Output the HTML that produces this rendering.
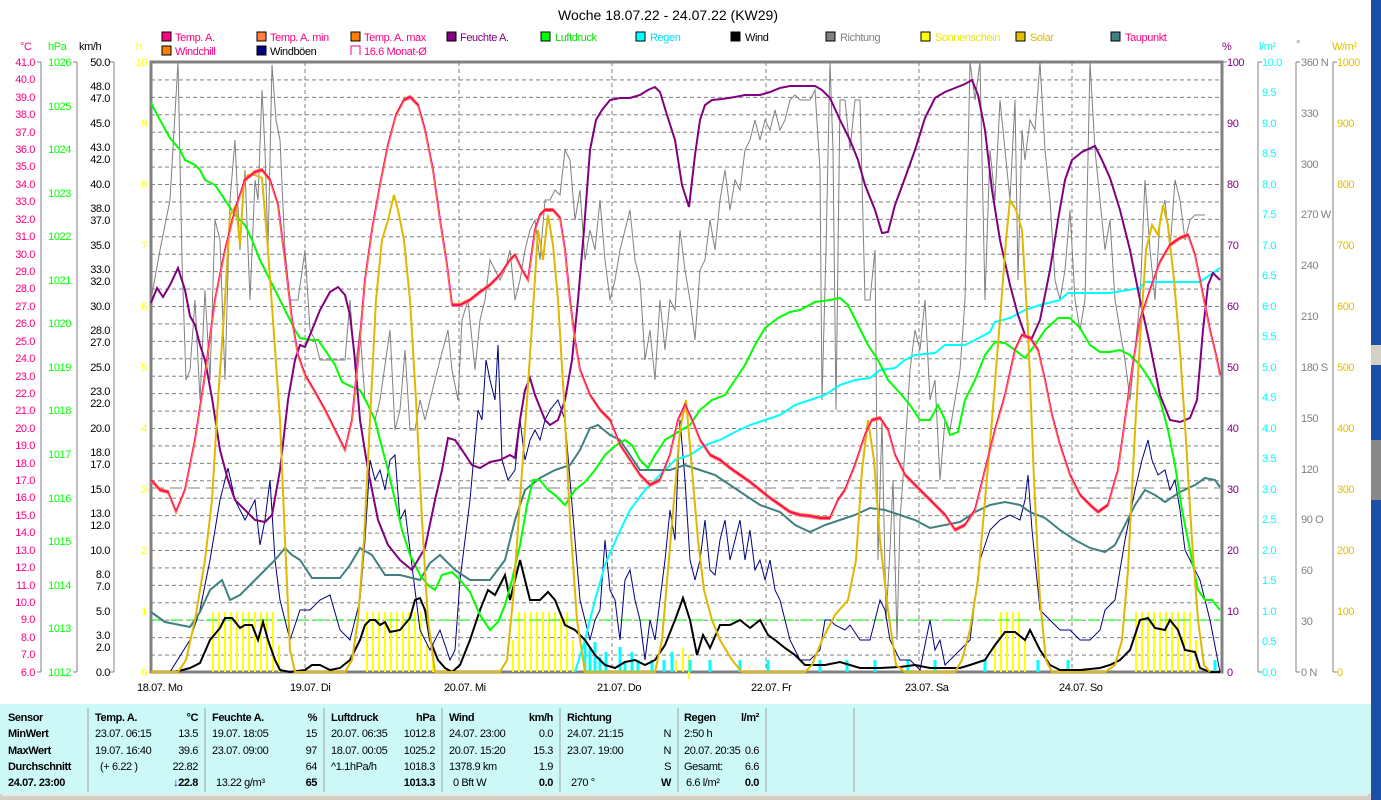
<!DOCTYPE html>
<html><head><meta charset="utf-8"><style>
html,body{margin:0;padding:0;background:#fff;width:1381px;height:800px;overflow:hidden}
svg{display:block;font-family:"Liberation Sans",sans-serif;letter-spacing:-0.4px}
</style></head><body>
<svg width="1381" height="800" viewBox="0 0 1381 800" xmlns="http://www.w3.org/2000/svg">
<rect width="1381" height="800" fill="#fff"/>
<text x="668" y="20" font-size="14" text-anchor="middle" fill="#000" style="letter-spacing:0">Woche 18.07.22 - 24.07.22 (KW29)</text>
<g font-size="11">
<rect x="162" y="32" width="9" height="9" fill="#ff0080" stroke="#000"/><text x="175" y="41" fill="#ff0080">Temp. A.</text>
<rect x="257" y="32" width="9" height="9" fill="#ff8040" stroke="#000"/><text x="270" y="41" fill="#ff0080">Temp. A. min</text>
<rect x="351" y="32" width="9" height="9" fill="#ff8000" stroke="#000"/><text x="364" y="41" fill="#ff0080">Temp. A. max</text>
<rect x="447" y="32" width="9" height="9" fill="#800080" stroke="#000"/><text x="460" y="41" fill="#800080">Feuchte A.</text>
<rect x="541" y="32" width="9" height="9" fill="#00ff00" stroke="#000"/><text x="555" y="41" fill="#00e000">Luftdruck</text>
<rect x="636" y="32" width="9" height="9" fill="#00ffff" stroke="#000"/><text x="650" y="41" fill="#00e0f0">Regen</text>
<rect x="731" y="32" width="9" height="9" fill="#000" stroke="#000"/><text x="745" y="41" fill="#000">Wind</text>
<rect x="826" y="32" width="9" height="9" fill="#808080" stroke="#000"/><text x="840" y="41" fill="#808080">Richtung</text>
<rect x="921" y="32" width="9" height="9" fill="#ffff00" stroke="#000"/><text x="935" y="41" fill="#e8e800">Sonnenschein</text>
<rect x="1016" y="32" width="9" height="9" fill="#e0c000" stroke="#000"/><text x="1030" y="41" fill="#e0b800">Solar</text>
<rect x="1111" y="32" width="9" height="9" fill="#408080" stroke="#000"/><text x="1125" y="41" fill="#ff0080">Taupunkt</text>
<rect x="162" y="46" width="9" height="9" fill="#ff8000" stroke="#000"/><text x="175" y="55" fill="#ff0080">Windchill</text>
<rect x="257" y="46" width="9" height="9" fill="#000080" stroke="#000"/><text x="270" y="55" fill="#000">Windböen</text>
<path d="M351 55V46h9v9" fill="none" stroke="#ff0080"/><text x="364" y="55" fill="#ff0080">16.6 Monat-Ø</text>
</g>
<g font-size="11">
<text x="20" y="50" fill="#ff0080">°C</text><text x="48" y="50" fill="#00ff00">hPa</text><text x="79" y="50" fill="#000">km/h</text><text x="136" y="50" fill="#ffff00">h</text>
<text x="1222" y="50" fill="#800080">%</text><text x="1259" y="50" fill="#00ffff">l/m²</text><text x="1296" y="48" fill="#808080">°</text><text x="1332" y="50" fill="#e0c000">W/m²</text>
</g>
<defs>
<pattern id="hg" x="151" y="62" width="1071" height="17.4286" patternUnits="userSpaceOnUse"><line x1="0" y1="0.5" x2="1071" y2="0.5" stroke="#808080" stroke-dasharray="4,3"/></pattern>
</defs>
<rect x="152" y="63" width="1069" height="609" fill="url(#hg)"/>
<g stroke="#808080" stroke-dasharray="4,3">
<line x1="305" y1="62" x2="305" y2="672"/><line x1="459" y1="62" x2="459" y2="672"/><line x1="612" y1="62" x2="612" y2="672"/><line x1="766" y1="62" x2="766" y2="672"/><line x1="919" y1="62" x2="919" y2="672"/><line x1="1072" y1="62" x2="1072" y2="672"/>
</g>
<g stroke="#808080" fill="none">
<line x1="41" y1="62" x2="41" y2="672"/><line x1="77" y1="62" x2="77" y2="672"/><line x1="114" y1="62" x2="114" y2="672"/>
<rect x="151" y="62" width="1071" height="610" stroke-width="3"/>
<line x1="1258" y1="62" x2="1258" y2="672"/><line x1="1296" y1="62" x2="1296" y2="672"/><line x1="1333" y1="62" x2="1333" y2="672"/>
</g>
<g font-size="11" fill="#ff0080" text-anchor="end">
<text x="35" y="66">41.0</text><text x="35" y="83">40.0</text><text x="35" y="101">39.0</text><text x="35" y="118">38.0</text><text x="35" y="136">37.0</text><text x="35" y="153">36.0</text><text x="35" y="170">35.0</text><text x="35" y="188">34.0</text><text x="35" y="205">33.0</text><text x="35" y="223">32.0</text><text x="35" y="240">31.0</text><text x="35" y="258">30.0</text><text x="35" y="275">29.0</text><text x="35" y="292">28.0</text><text x="35" y="310">27.0</text><text x="35" y="327">26.0</text><text x="35" y="345">25.0</text><text x="35" y="362">24.0</text><text x="35" y="380">23.0</text><text x="35" y="397">22.0</text><text x="35" y="414">21.0</text><text x="35" y="432">20.0</text><text x="35" y="449">19.0</text><text x="35" y="467">18.0</text><text x="35" y="484">17.0</text><text x="35" y="501">16.0</text><text x="35" y="519">15.0</text><text x="35" y="536">14.0</text><text x="35" y="554">13.0</text><text x="35" y="571">12.0</text><text x="35" y="589">11.0</text><text x="35" y="606">10.0</text><text x="35" y="623">9.0</text><text x="35" y="641">8.0</text><text x="35" y="658">7.0</text><text x="35" y="676">6.0</text>
</g>
<g font-size="11" fill="#00ff00" text-anchor="end">
<text x="71" y="66">1026</text><text x="71" y="110">1025</text><text x="71" y="153">1024</text><text x="71" y="197">1023</text><text x="71" y="240">1022</text><text x="71" y="284">1021</text><text x="71" y="327">1020</text><text x="71" y="371">1019</text><text x="71" y="414">1018</text><text x="71" y="458">1017</text><text x="71" y="502">1016</text><text x="71" y="545">1015</text><text x="71" y="589">1014</text><text x="71" y="632">1013</text><text x="71" y="676">1012</text>
</g>
<g font-size="11" fill="#000" text-anchor="end">
<text x="110" y="66">50.0</text><text x="110" y="90">48.0</text><text x="110" y="102">47.0</text><text x="110" y="127">45.0</text><text x="110" y="151">43.0</text><text x="110" y="163">42.0</text><text x="110" y="188">40.0</text><text x="110" y="212">38.0</text><text x="110" y="224">37.0</text><text x="110" y="249">35.0</text><text x="110" y="273">33.0</text><text x="110" y="285">32.0</text><text x="110" y="310">30.0</text><text x="110" y="334">28.0</text><text x="110" y="346">27.0</text><text x="110" y="371">25.0</text><text x="110" y="395">23.0</text><text x="110" y="407">22.0</text><text x="110" y="432">20.0</text><text x="110" y="456">18.0</text><text x="110" y="468">17.0</text><text x="110" y="493">15.0</text><text x="110" y="517">13.0</text><text x="110" y="529">12.0</text><text x="110" y="554">10.0</text><text x="110" y="578">8.0</text><text x="110" y="590">7.0</text><text x="110" y="615">5.0</text><text x="110" y="639">3.0</text><text x="110" y="651">2.0</text><text x="110" y="676">0.0</text>
</g>
<g font-size="11" fill="#ffff00" text-anchor="end">
<text x="147" y="66">10</text><text x="147" y="127">9</text><text x="147" y="188">8</text><text x="147" y="249">7</text><text x="147" y="310">6</text><text x="147" y="371">5</text><text x="147" y="432">4</text><text x="147" y="493">3</text><text x="147" y="554">2</text><text x="147" y="615">1</text><text x="147" y="676">0</text>
</g>
<g font-size="11" fill="#800080">
<text x="1227" y="66">100</text><text x="1227" y="127">90</text><text x="1227" y="188">80</text><text x="1227" y="249">70</text><text x="1227" y="310">60</text><text x="1227" y="371">50</text><text x="1227" y="432">40</text><text x="1227" y="493">30</text><text x="1227" y="554">20</text><text x="1227" y="615">10</text><text x="1227" y="676">0</text>
</g>
<g font-size="11" fill="#00ffff">
<text x="1262" y="66">10.0</text><text x="1262" y="96">9.5</text><text x="1262" y="127">9.0</text><text x="1262" y="157">8.5</text><text x="1262" y="188">8.0</text><text x="1262" y="218">7.5</text><text x="1262" y="249">7.0</text><text x="1262" y="279">6.5</text><text x="1262" y="310">6.0</text><text x="1262" y="340">5.5</text><text x="1262" y="371">5.0</text><text x="1262" y="401">4.5</text><text x="1262" y="432">4.0</text><text x="1262" y="462">3.5</text><text x="1262" y="493">3.0</text><text x="1262" y="523">2.5</text><text x="1262" y="554">2.0</text><text x="1262" y="584">1.5</text><text x="1262" y="615">1.0</text><text x="1262" y="645">0.5</text><text x="1262" y="676">0.0</text>
</g>
<g font-size="11" fill="#808080">
<text x="1301" y="66">360 N</text><text x="1301" y="117">330</text><text x="1301" y="168">300</text><text x="1301" y="218">270 W</text><text x="1301" y="269">240</text><text x="1301" y="320">210</text><text x="1301" y="371">180 S</text><text x="1301" y="422">150</text><text x="1301" y="473">120</text><text x="1301" y="523">90 O</text><text x="1301" y="574">60</text><text x="1301" y="625">30</text><text x="1301" y="676">0 N</text>
</g>
<g font-size="11" fill="#e0c000">
<text x="1337" y="66">1000</text><text x="1337" y="127">900</text><text x="1337" y="188">800</text><text x="1337" y="249">700</text><text x="1337" y="310">600</text><text x="1337" y="371">500</text><text x="1337" y="432">400</text><text x="1337" y="493">300</text><text x="1337" y="554">200</text><text x="1337" y="615">100</text><text x="1337" y="676">0</text>
</g>
<g stroke="#808080">
<path d="M37 62h4M37 672h4M73 62h4M73 672h4M110 62h4M110 672h4M1222 62h5M1258 62h4M1296 62h4M1333 62h4M1258 672h4M1296 672h4M1333 672h4"/>
</g>
<g font-size="11" fill="#000">
<text x="137" y="691">18.07. Mo</text><text x="290" y="691">19.07. Di</text><text x="444" y="691">20.07. Mi</text><text x="597" y="691">21.07. Do</text><text x="751" y="691">22.07. Fr</text><text x="905" y="691">23.07. Sa</text><text x="1059" y="691">24.07. So</text>
</g>
<g stroke="#ffff00" stroke-width="2">
<path d="M213 612v60M219 612v60M225 612v60M231 612v60M237 612v60M243 612v60M249 612v60M255 612v60M261 612v60M267 612v60M273 612v60M279 645v27
M367 612v60M373 612v60M379 612v60M385 612v60M391 612v60M397 612v60M403 612v60M409 612v60M415 612v60M421 612v60M427 645v27M433 645v27
M513 640v32M519 612v60M525 612v60M531 612v60M537 612v60M543 612v60M549 612v60M555 612v60M561 612v60M567 612v60M573 640v32
M683 648v24M689 655v24M676 660v12M1001 612v60M1007 612v60M1013 612v60M1019 612v60M1025 640v32M995 645v27
M1136 612v60M1142 612v60M1148 612v60M1154 612v60M1160 612v60M1166 612v60M1172 612v60M1178 612v60M1184 612v60M1190 612v60M1196 640v32"/>
</g>
<g stroke="#00ffff" stroke-width="3">
<path d="M585 672v-35M590 672v-25M595 672v-30M600 672v-15M606 672v-20M620 672v-25M625 672v-10M632 672v-20M638 672v-12M652 672v-12M664 672v-12M672 672v-20M690 672v-12M710 672v-12M740 672v-12M768 672v-12M820 672v-12M847 672v-12M875 672v-12M908 672v-12M935 672v-12M985 672v-12M1038 672v-12M1068 672v-12M1215 672v-12"/>
</g>
<line x1="152" y1="620" x2="1221" y2="620" stroke="#00ff00" stroke-dasharray="12,6"/>
<line x1="152" y1="488" x2="1221" y2="488" stroke="#808080" stroke-dasharray="12,6"/>
<polyline fill="none" stroke="#808080" stroke-width="1" points="151,300 160,250 170,200 178,62 182,260 186,380 190,370 195,300 200,400 205,290 210,380 215,220 220,240 225,380 230,200 235,140 240,250 245,170 250,300 255,180 258,200 262,90 265,150 268,250 272,65 276,120 280,140 285,250 290,300 298,300 305,250 310,330 315,340 320,360 345,360 350,300 355,370 360,330 365,400 375,420 380,400 390,330 395,430 400,410 405,350 410,430 415,430 420,400 425,420 430,400 440,360 448,330 452,370 458,400 462,320 468,300 472,340 475,370 480,320 485,300 490,260 495,270 500,280 505,270 510,250 515,300 520,280 525,250 530,230 535,220 540,260 545,200 550,200 555,190 560,195 565,150 570,160 575,220 580,190 585,260 590,230 595,250 600,200 605,260 610,300 615,280 620,250 625,230 630,210 635,260 640,280 645,360 650,330 655,380 660,300 665,350 670,300 675,310 680,230 685,270 690,300 695,340 700,270 705,260 710,220 715,250 720,200 725,170 730,210 735,180 740,190 745,150 750,140 755,120 760,140 765,120 770,130 775,110 780,130 785,120 790,100 795,95 800,100 810,100 815,90 820,170 822,400 826,250 830,62 833,150 836,410 840,100 845,100 850,150 855,100 860,100 865,300 870,300 875,250 878,560 882,420 886,620 890,550 893,480 897,640 900,520 905,450 910,370 915,330 920,350 925,300 930,400 935,380 940,480 945,420 950,430 955,400 960,370 965,300 970,62 975,100 980,62 985,300 990,150 995,200 1000,100 1005,150 1010,200 1015,100 1018,280 1022,130 1025,160 1030,120 1035,130 1040,62 1045,150 1050,200 1055,280 1060,300 1065,270 1070,210 1075,300 1080,330 1085,300 1090,62 1095,150 1100,200 1105,250 1110,220 1115,300 1120,330 1125,360 1130,400 1135,350 1140,300 1145,180 1150,250 1155,300 1160,220 1165,200 1170,250 1175,180 1180,200 1185,240 1190,220 1195,215 1205,215"/>
<polyline fill="none" stroke="#000080" stroke-width="1" points="151,672 170,672 190,640 200,610 210,560 220,500 228,468 235,500 245,520 255,500 260,545 265,520 270,480 275,560 280,600 290,640 300,610 310,610 320,600 330,595 340,630 350,640 360,600 365,540 370,460 375,480 380,470 385,490 390,460 395,455 400,520 405,510 410,550 420,630 430,650 440,630 450,660 455,650 460,580 470,500 478,410 482,420 486,360 490,380 495,400 498,345 502,460 508,480 515,470 520,420 525,460 530,440 535,430 540,440 545,420 550,410 558,400 565,420 570,480 575,540 580,600 585,620 590,640 595,620 600,610 605,540 610,590 615,600 620,640 625,580 630,570 635,600 640,620 645,660 650,620 655,640 660,600 665,560 670,510 675,540 680,420 685,480 690,560 695,580 700,560 705,520 710,570 715,575 720,540 725,520 730,560 740,520 745,560 750,530 755,570 760,560 765,580 770,560 775,590 780,600 790,640 800,660 810,660 820,650 825,620 830,620 835,625 845,630 850,625 860,640 870,640 880,600 885,610 890,640 900,660 910,660 920,670 930,620 935,650 940,640 945,665 960,650 970,640 980,560 990,530 1000,520 1010,515 1020,520 1025,500 1028,475 1032,530 1040,610 1050,620 1060,630 1070,630 1080,640 1090,640 1100,630 1105,610 1115,600 1125,540 1135,490 1142,460 1148,440 1152,460 1158,475 1165,470 1170,490 1175,480 1180,510 1185,550 1190,560 1200,580 1210,620 1220,672"/>
<polyline fill="none" stroke="#00ffff" stroke-width="2" points="575,672 585,640 595,600 605,565 618,535 630,510 645,490 660,475 675,460 690,455 705,445 720,440 735,432 750,425 765,420 780,415 795,405 810,400 825,395 840,385 855,380 870,378 880,370 895,368 905,360 915,355 935,353 945,345 965,345 975,340 990,332 995,322 1010,318 1025,310 1040,305 1060,300 1068,293 1110,293 1140,288 1145,282 1200,282 1210,275 1220,268"/>
<polyline fill="none" stroke="#000" stroke-width="2" points="151,672 175,672 190,668 200,663 210,640 220,628 225,618 232,618 240,628 245,625 252,625 258,640 263,622 268,640 275,660 280,670 290,672 305,670 312,665 320,665 330,670 340,668 350,660 360,640 365,625 370,620 375,620 380,625 385,622 390,632 400,630 410,618 415,600 420,598 425,610 430,640 438,660 445,668 452,672 460,665 470,640 480,610 488,590 495,595 500,585 505,575 510,600 520,560 525,580 530,600 540,600 548,592 555,600 565,625 575,630 585,640 595,655 605,665 615,668 625,662 635,660 645,665 655,660 665,645 675,620 683,598 690,620 697,655 703,635 710,648 720,625 730,625 740,620 750,628 760,620 768,635 775,640 785,648 795,655 805,665 815,665 825,665 840,662 850,665 860,668 880,668 900,667 915,665 930,668 945,668 960,668 970,665 985,660 995,645 1005,632 1015,632 1025,640 1030,630 1040,650 1050,665 1060,670 1080,670 1100,668 1110,665 1120,660 1130,650 1140,620 1148,618 1155,628 1165,630 1170,620 1178,630 1185,650 1195,652 1200,668 1210,672 1220,672"/>
<polyline fill="none" stroke="#408080" stroke-width="2" points="151,612 165,622 180,625 190,627 200,612 210,590 222,580 230,600 240,595 255,580 265,570 275,560 285,548 292,555 300,560 312,578 325,578 340,578 350,565 360,548 372,555 385,575 400,575 420,580 430,563 440,555 455,570 470,580 490,580 505,560 515,520 525,490 540,478 555,470 570,465 580,450 590,428 598,425 610,435 620,440 630,455 640,470 655,470 670,470 685,465 700,470 715,475 730,485 745,495 760,505 780,512 795,525 810,532 825,525 840,520 855,515 870,508 885,510 900,515 915,520 930,528 945,525 960,522 975,512 990,505 1005,502 1020,505 1030,512 1045,518 1060,530 1075,540 1090,548 1105,552 1115,545 1125,525 1135,505 1145,490 1155,495 1165,502 1180,492 1195,485 1205,478 1215,480 1220,487"/>
<polyline fill="none" stroke="#00ff00" stroke-width="2" points="151,103 160,120 170,138 180,150 185,160 195,165 200,170 205,180 215,185 225,200 235,215 245,225 252,240 260,260 270,280 280,300 290,320 295,330 300,338 310,340 318,340 325,350 335,365 342,382 350,386 360,390 368,405 375,420 380,440 388,470 395,500 402,530 410,555 420,575 428,585 435,590 442,575 452,572 460,580 470,592 480,615 490,630 498,622 505,605 512,580 520,545 527,505 533,480 540,480 548,490 555,495 565,505 575,490 585,482 595,470 605,455 615,446 625,440 632,445 640,460 648,468 655,455 665,440 678,432 690,425 700,410 712,400 725,395 735,380 745,365 755,345 765,328 778,318 790,312 800,310 815,302 830,300 840,298 848,305 858,325 868,345 878,360 888,380 900,393 910,405 920,420 930,420 938,405 945,420 950,435 958,432 965,400 975,380 985,355 995,342 1005,343 1015,350 1025,358 1035,345 1045,330 1058,318 1070,318 1080,328 1090,345 1100,352 1110,352 1120,350 1130,355 1140,365 1150,380 1160,400 1168,430 1175,465 1182,510 1190,550 1198,590 1205,600 1212,600 1220,610"/>
<polyline fill="none" stroke="#800080" stroke-width="2" points="151,303 157,288 163,297 170,285 178,268 185,290 190,316 195,325 200,345 205,360 212,398 220,450 228,480 235,500 245,510 255,520 265,522 272,515 280,470 288,400 295,360 300,345 305,347 312,330 320,310 330,292 338,287 345,295 350,315 355,360 360,420 368,470 378,520 388,545 400,560 412,570 425,548 435,500 442,470 448,438 455,440 462,450 472,465 480,468 490,462 500,460 510,455 515,458 520,420 525,390 530,378 535,395 545,420 550,425 558,420 565,400 572,360 578,300 584,230 590,150 596,120 602,110 610,100 620,98 630,98 640,95 648,90 655,87 660,92 667,115 675,140 682,185 689,207 695,155 700,120 705,105 712,100 722,99 735,97 745,95 760,95 770,92 780,88 790,86 805,86 815,86 822,90 830,98 840,120 850,140 858,160 865,185 875,210 882,233 888,232 895,205 905,178 915,150 925,118 935,98 945,92 955,88 965,84 972,80 978,95 985,130 992,190 1000,240 1010,285 1018,315 1025,335 1032,338 1040,320 1050,270 1058,220 1065,180 1072,160 1082,152 1095,146 1102,160 1110,178 1120,210 1130,250 1140,300 1150,345 1160,395 1170,420 1180,422 1190,418 1197,400 1203,330 1208,285 1213,273 1220,280"/>
<polyline fill="none" stroke="#e0b800" stroke-width="2" points="151,672 178,672 186,660 195,620 205,560 212,500 218,400 225,300 230,215 236,205 240,245 244,180 248,175 255,175 262,178 268,250 273,320 280,420 285,540 290,650 295,672 345,672 352,660 358,620 364,540 370,420 376,300 382,240 388,220 394,195 398,210 404,240 410,300 416,400 422,520 428,620 435,672 500,672 507,660 513,600 520,500 527,400 533,310 538,230 543,260 548,215 553,245 558,300 564,400 570,520 577,620 585,672 655,672 662,640 668,570 674,500 680,430 686,400 692,470 698,540 704,590 712,620 720,640 732,660 742,672 805,672 812,665 822,640 835,615 848,600 856,560 862,470 868,420 874,460 880,540 888,610 896,665 905,672 955,672 962,660 970,630 978,580 985,500 992,420 1000,320 1006,240 1010,200 1016,210 1022,230 1028,330 1034,480 1040,600 1046,660 1052,672 1105,672 1115,665 1122,640 1128,570 1134,450 1140,340 1146,250 1152,225 1158,235 1163,205 1168,225 1174,280 1180,350 1186,440 1192,540 1198,620 1204,665 1210,672"/>
<polyline fill="none" stroke="#ff8000" stroke-width="1" transform="translate(0,-1.5)" points="151,480 160,490 168,492 176,512 185,490 195,440 205,375 215,300 225,250 235,210 245,180 255,172 262,170 270,180 278,205 285,260 292,320 298,355 305,375 315,392 325,410 335,430 345,450 352,420 358,360 365,280 372,230 380,185 388,145 396,115 404,100 410,97 418,105 425,130 433,170 440,220 447,265 452,305 460,305 470,300 480,292 490,285 500,275 510,260 515,255 522,270 528,280 535,230 540,215 545,210 553,210 560,218 565,250 570,300 575,340 580,370 590,395 600,410 610,420 620,445 630,460 640,475 650,485 660,480 670,455 678,420 685,405 692,420 700,440 710,455 720,460 730,468 740,475 750,482 760,490 770,498 780,505 790,512 800,515 810,516 820,518 830,518 838,500 845,490 855,465 865,435 872,420 880,418 888,430 895,455 905,475 915,485 925,495 935,505 945,515 955,530 965,525 975,510 985,470 995,430 1005,395 1015,350 1022,335 1030,338 1038,350 1045,380 1052,415 1060,445 1070,475 1080,495 1090,505 1098,512 1108,505 1118,470 1125,420 1132,370 1140,320 1150,290 1160,262 1170,245 1180,238 1188,235 1195,255 1202,290 1210,330 1216,355 1220,375"/>
<polyline fill="none" stroke="#ff0080" stroke-width="2" points="151,480 160,490 168,492 176,512 185,490 195,440 205,375 215,300 225,250 235,210 245,180 255,172 262,170 270,180 278,205 285,260 292,320 298,355 305,375 315,392 325,410 335,430 345,450 352,420 358,360 365,280 372,230 380,185 388,145 396,115 404,100 410,97 418,105 425,130 433,170 440,220 447,265 452,305 460,305 470,300 480,292 490,285 500,275 510,260 515,255 522,270 528,280 535,230 540,215 545,210 553,210 560,218 565,250 570,300 575,340 580,370 590,395 600,410 610,420 620,445 630,460 640,475 650,485 660,480 670,455 678,420 685,405 692,420 700,440 710,455 720,460 730,468 740,475 750,482 760,490 770,498 780,505 790,512 800,515 810,516 820,518 830,518 838,500 845,490 855,465 865,435 872,420 880,418 888,430 895,455 905,475 915,485 925,495 935,505 945,515 955,530 965,525 975,510 985,470 995,430 1005,395 1015,350 1022,335 1030,338 1038,350 1045,380 1052,415 1060,445 1070,475 1080,495 1090,505 1098,512 1108,505 1118,470 1125,420 1132,370 1140,320 1150,290 1160,262 1170,245 1180,238 1188,235 1195,255 1202,290 1210,330 1216,355 1220,375"/>
<polyline fill="none" stroke="#ff8040" stroke-width="1" transform="translate(0,1.5)" points="151,480 160,490 168,492 176,512 185,490 195,440 205,375 215,300 225,250 235,210 245,180 255,172 262,170 270,180 278,205 285,260 292,320 298,355 305,375 315,392 325,410 335,430 345,450 352,420 358,360 365,280 372,230 380,185 388,145 396,115 404,100 410,97 418,105 425,130 433,170 440,220 447,265 452,305 460,305 470,300 480,292 490,285 500,275 510,260 515,255 522,270 528,280 535,230 540,215 545,210 553,210 560,218 565,250 570,300 575,340 580,370 590,395 600,410 610,420 620,445 630,460 640,475 650,485 660,480 670,455 678,420 685,405 692,420 700,440 710,455 720,460 730,468 740,475 750,482 760,490 770,498 780,505 790,512 800,515 810,516 820,518 830,518 838,500 845,490 855,465 865,435 872,420 880,418 888,430 895,455 905,475 915,485 925,495 935,505 945,515 955,530 965,525 975,510 985,470 995,430 1005,395 1015,350 1022,335 1030,338 1038,350 1045,380 1052,415 1060,445 1070,475 1080,495 1090,505 1098,512 1108,505 1118,470 1125,420 1132,370 1140,320 1150,290 1160,262 1170,245 1180,238 1188,235 1195,255 1202,290 1210,330 1216,355 1220,375"/>
<rect x="0" y="704" width="1371" height="90" fill="#ccf8f8"/>
<g stroke="#a0a0a0"><path d="M88 708v84M205 708v84M324 708v84M442 708v84M560 708v84M678 708v84M766 708v84M854 708v84"/></g>
<rect x="0" y="794" width="1371" height="6" fill="#d4d0c8"/>
<g stroke="#fff"><path d="M2 795h1366"/></g>
<g font-size="11" fill="#000">
<g font-weight="bold"><text x="8" y="721">Sensor</text><text x="8" y="737">MinWert</text><text x="8" y="754">MaxWert</text><text x="8" y="770">Durchschnitt</text><text x="8" y="786">24.07. 23:00</text>
<text x="95" y="721">Temp. A.</text><text x="198" y="721" text-anchor="end">°C</text>
<text x="212" y="721">Feuchte A.</text><text x="317" y="721" text-anchor="end">%</text>
<text x="331" y="721">Luftdruck</text><text x="435" y="721" text-anchor="end">hPa</text>
<text x="449" y="721">Wind</text><text x="553" y="721" text-anchor="end">km/h</text>
<text x="567" y="721">Richtung</text>
<text x="684" y="721">Regen</text><text x="759" y="721" text-anchor="end">l/m²</text>
<text x="198" y="786" text-anchor="end"><tspan fill="#0000ff">↓</tspan>22.8</text><text x="317" y="786" text-anchor="end">65</text><text x="435" y="786" text-anchor="end">1013.3</text><text x="553" y="786" text-anchor="end">0.0</text><text x="671" y="786" text-anchor="end">W</text><text x="759" y="786" text-anchor="end">0.0</text></g>
<text x="95" y="737">23.07. 06:15</text><text x="198" y="737" text-anchor="end">13.5</text>
<text x="95" y="754">19.07. 16:40</text><text x="198" y="754" text-anchor="end">39.6</text>
<text x="100" y="770">(+ 6.22 )</text><text x="198" y="770" text-anchor="end">22.82</text>
<text x="212" y="737">19.07. 18:05</text><text x="317" y="737" text-anchor="end">15</text>
<text x="212" y="754">23.07. 09:00</text><text x="317" y="754" text-anchor="end">97</text>
<text x="317" y="770" text-anchor="end">64</text><text x="216" y="786">13.22 g/m³</text>
<text x="331" y="737">20.07. 06:35</text><text x="435" y="737" text-anchor="end">1012.8</text>
<text x="331" y="754">18.07. 00:05</text><text x="435" y="754" text-anchor="end">1025.2</text>
<text x="331" y="770">^1.1hPa/h</text><text x="435" y="770" text-anchor="end">1018.3</text>
<text x="449" y="737">24.07. 23:00</text><text x="553" y="737" text-anchor="end">0.0</text>
<text x="449" y="754">20.07. 15:20</text><text x="553" y="754" text-anchor="end">15.3</text>
<text x="449" y="770">1378.9 km</text><text x="553" y="770" text-anchor="end">1.9</text>
<text x="453" y="786">0 Bft W</text>
<text x="567" y="737">24.07. 21:15</text><text x="671" y="737" text-anchor="end">N</text>
<text x="567" y="754">23.07. 19:00</text><text x="671" y="754" text-anchor="end">N</text>
<text x="671" y="770" text-anchor="end">S</text><text x="571" y="786">270 °</text>
<text x="684" y="737">2:50 h</text>
<text x="684" y="754">20.07. 20:35</text><text x="759" y="754" text-anchor="end">0.6</text>
<text x="684" y="770">Gesamt:</text><text x="759" y="770" text-anchor="end">6.6</text>
<text x="686" y="786">6.6 l/m²</text>
</g>
<rect x="1371" y="0" width="10" height="800" fill="#1c4fa8"/>
<rect x="1371" y="345" width="10" height="20" fill="#d4d0c8"/>
<rect x="1371" y="440" width="10" height="60" fill="#888"/>
</svg>
</body></html>
